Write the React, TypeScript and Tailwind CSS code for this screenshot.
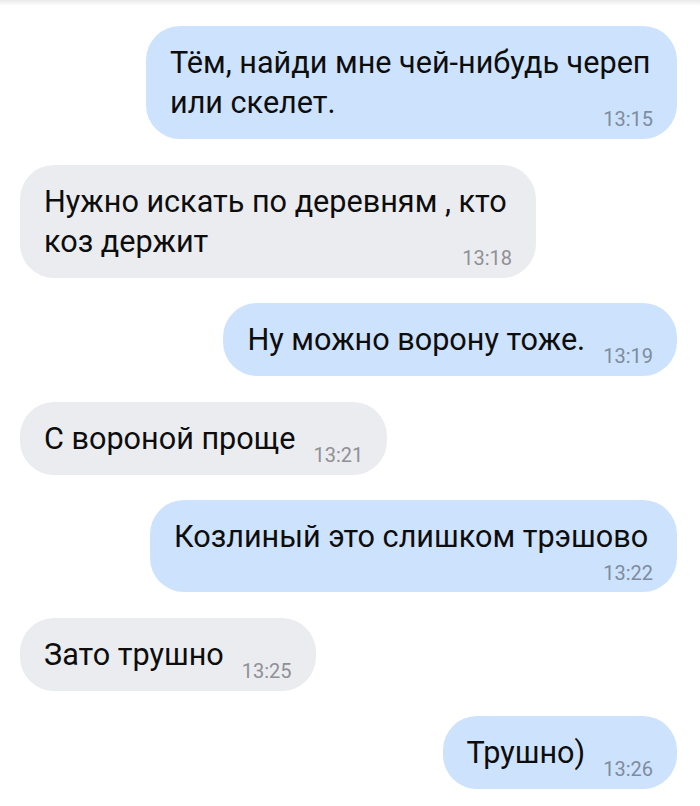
type Msg = {
	text: string;
	time: string;
	mine: boolean;
	maxW: string;
	timeBelow?: boolean;
};

const messages: Msg[] = [
	{text: "Тём, найди мне чей-нибудь череп или скелет.", time: "13:15", mine: true, maxW: "max-w-[531px]"},
	{text: "Нужно искать по деревням , кто коз держит", time: "13:18", mine: false, maxW: "max-w-[516px]"},
	{text: "Ну можно ворону тоже.", time: "13:19", mine: true, maxW: "max-w-[531px]"},
	{text: "С вороной проще", time: "13:21", mine: false, maxW: "max-w-[531px]"},
	{text: "Козлиный это слишком трэшово", time: "13:22", mine: true, maxW: "max-w-[527px]", timeBelow: true},
	{text: "Зато трушно", time: "13:25", mine: false, maxW: "max-w-[531px]"},
	{text: "Трушно)", time: "13:26", mine: true, maxW: "max-w-[531px]"},
];

function Bubble({msg}: {msg: Msg}) {
	return (
		<div className={msg.mine ? "flex justify-end" : "flex justify-start"}>
			<div
				className={
					"w-fit flow-root rounded-[34px] px-[24px] pt-[17px] pb-[16px] " +
					msg.maxW +
					(msg.mine ? " bg-[#cde2fc]" : " bg-[#ebecf0]")
				}
			>
				<span className="text-[30.6px] leading-[40px] text-[#0d0d0d]">{msg.text}</span>
				<span
					className={
						"float-right ml-[18px] text-[20px] leading-[22px] " +
						(msg.timeBelow ? "mt-[5px] mb-[-8px] " : "mt-[25px] mb-[-10px] ") +
						(msg.mine ? "text-[#7e8c9d]" : "text-[#8f9096]")
					}
				>
					{msg.time}
				</span>
			</div>
		</div>
	);
}

export default function App() {
	return (
		<div className="min-h-[806px] bg-white font-['Roboto',sans-serif]">
			<div className="h-[6px] bg-gradient-to-b from-[#e9e9e9] to-white" />
			<div className="flex flex-col gap-[25.5px] pl-[20px] pr-[23px] pt-[20px]">
				{messages.map((m) => (
					<Bubble key={m.time} msg={m} />
				))}
			</div>
		</div>
	);
}
